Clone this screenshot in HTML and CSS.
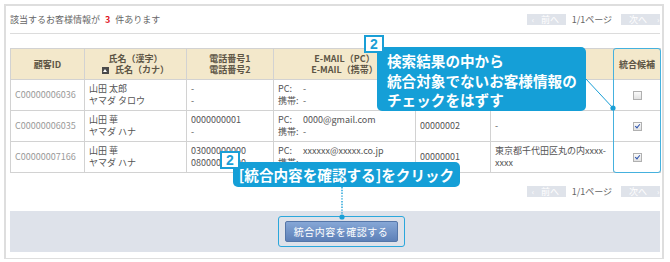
FILE: index.html
```html
<!DOCTYPE html>
<html lang="ja">
<head>
	<meta charset="UTF-8">
	<meta name="viewport" content="width=device-width, initial-scale=1.0">
	<title>お客様情報の統合</title>
	<link rel="stylesheet" href="styles.css">
</head>
<body>
	<div class="frame">
		<div class="summary">
			<p class="count">該当するお客様情報が <em>3</em> 件あります</p>
			<div class="pager">
				<span class="pg-btn prev"><i>‹</i>前へ</span>
				<span class="pg-info">1/1ページ</span>
				<span class="pg-btn next">次へ<i>›</i></span>
			</div>
		</div>

		<table class="results">
			<colgroup>
				<col style="width:74px">
				<col style="width:102px">
				<col style="width:87px">
				<col style="width:142px">
				<col style="width:75px">
				<col style="width:123px">
				<col style="width:47px">
			</colgroup>
			<thead>
				<tr>
					<th>顧客ID</th>
					<th>氏名（漢字）<br><span class="sort"></span> 氏名（カナ）</th>
					<th>電話番号1<br>電話番号2</th>
					<th>E-MAIL（PC）<br>E-MAIL（携帯）</th>
					<th></th>
					<th></th>
					<th>統合候補</th>
				</tr>
			</thead>
			<tbody>
				<tr>
					<td class="cid">C00000006036</td>
					<td>山田 太郎<br>ヤマダ タロウ</td>
					<td>-<br>-</td>
					<td><span class="lbl">PC:</span>-<br><span class="lbl">携帯:</span>-</td>
					<td></td>
					<td></td>
					<td class="pick"><span class="chk"></span></td>
				</tr>
				<tr>
					<td class="cid">C00000006035</td>
					<td>山田 華<br>ヤマダ ハナ</td>
					<td>0000000001<br>-</td>
					<td><span class="lbl">PC:</span>0000@gmail.com<br><span class="lbl">携帯:</span>-</td>
					<td>00000002</td>
					<td>-</td>
					<td class="pick"><span class="chk on"></span></td>
				</tr>
				<tr>
					<td class="cid">C00000007166</td>
					<td>山田 華<br>ヤマダ ハナ</td>
					<td>03000000000<br>08000000000</td>
					<td><span class="lbl">PC:</span>xxxxxx@xxxxx.co.jp<br><span class="lbl">携帯:</span>-</td>
					<td>00000001</td>
					<td>東京都千代田区丸の内xxxx-<br>xxxx</td>
					<td class="pick"><span class="chk on"></span></td>
				</tr>
			</tbody>
		</table>

		<div class="pager pager-bottom">
			<span class="pg-btn prev"><i>‹</i>前へ</span>
			<span class="pg-info">1/1ページ</span>
			<span class="pg-btn next">次へ<i>›</i></span>
		</div>

		<div class="actions">
			<span class="confirm-wrap"><button type="button" class="confirm">統合内容を確認する</button></span>
		</div>
	</div>

	<!-- 注釈 -->
	<div class="col-mark"></div>
	<div class="note note-check">検索結果の中から<br>統合対象でないお客様情報の<br>チェックをはずす</div>
	<span class="step step-check">2</span>
	<div class="note note-confirm">[統合内容を確認する]をクリック</div>
	<span class="step step-confirm">2</span>
	<svg class="leaders" width="670" height="262" viewBox="0 0 670 262">
		<line x1="586" y1="79" x2="613" y2="108" stroke="#1a9fd6" stroke-width="1"/>
		<circle cx="613" cy="108" r="2.6" fill="#1a9fd6"/>
		<line x1="342" y1="187" x2="342" y2="217" stroke="#1a9fd6" stroke-width="1.4" stroke-dasharray="1.4 1.4"/>
		<circle cx="342" cy="217" r="2.6" fill="#1a9fd6"/>
	</svg>
</body>
</html>
```

FILE: styles.css
```css
html, body {
	margin: 0;
	background: #fff;
}
body {
	position: relative;
	width: 670px;
	height: 262px;
	overflow: hidden;
	font-family: "Noto Sans CJK JP", "Noto Sans", sans-serif;
	color: #555;
}

.frame {
	box-sizing: border-box;
	width: 660px;
	height: 255px;
	margin: 4px 0 0 4px;
	padding: 0 2px 0 4px;
	border: 2px solid #dedede;
	border-bottom-width: 1px;
}

/* 件数 + ページ送り */
.summary {
	display: flex;
	align-items: center;
	justify-content: space-between;
	height: 27px;
	border-bottom: 1px solid #dcdcdc;
}
.count {
	margin: 0;
	font-size: 9px;
	color: #666;
}
.count em {
	font-style: normal;
	font-weight: 700;
	color: #e0141e;
	margin: 0 3px;
}
.pager {
	display: flex;
	align-items: center;
	font-size: 9px;
	line-height: 11px;
}
.pg-btn {
	display: flex;
	align-items: center;
	box-sizing: border-box;
	width: 39px;
	height: 11px;
	background: #dfe3ea;
	color: #fff;
}
.pg-btn i {
	font-style: normal;
	font-size: 8px;
}
.prev {
	padding-left: 5px;
	gap: 7px;
}
.next {
	padding-left: 8px;
	gap: 10px;
}
.pg-info {
	margin: 0 9px 0 6px;
	color: #666;
}
.pager-bottom {
	justify-content: flex-end;
	margin-top: 13px;
}

/* 一覧 */
.results {
	width: 650px;
	margin-top: 14px;
	border-collapse: collapse;
	table-layout: fixed;
	font-size: 9px;
	line-height: 12px;
}
.results th,
.results td {
	border: 1px solid #d2d2d2;
	padding: 0 4px;
	vertical-align: middle;
	text-align: left;
	white-space: nowrap;
	overflow: hidden;
}
.results th {
	height: 30px;
	background: #f3e8cb;
	color: #5d5545;
	font-weight: 700;
	text-align: center;
	line-height: 11px;
}
.results td {
	height: 30px;
}
.cid {
	color: #9a9a9a;
}
.lbl {
	display: inline-block;
	width: 25px;
}
.sort {
	display: inline-block;
	width: 7px;
	height: 7px;
	background: #4a4a4a;
	vertical-align: -1px;
	margin-right: 4px;
	position: relative;
}
.sort::after {
	content: '';
	position: absolute;
	left: 1px; top: 2px;
	border-left: 2.5px solid transparent;
	border-right: 2.5px solid transparent;
	border-bottom: 3px solid #fff;
}
.pick {
	text-align: center !important;
}
.chk {
	display: inline-block;
	position: relative;
	box-sizing: border-box;
	width: 9px;
	height: 9px;
	border: 1px solid #b0b0b0;
	background: linear-gradient(#fafafa, #e2e2e2);
	vertical-align: middle;
}
.chk.on::after {
	content: '';
	position: absolute;
	left: 2px; top: 0;
	width: 2px; height: 4px;
	border-right: 1.5px solid #2f56b0;
	border-bottom: 1.5px solid #2f56b0;
	transform: rotate(40deg);
}

/* 下部ボタン */
.actions {
	display: flex;
	align-items: center;
	justify-content: center;
	height: 41px;
	margin-top: 14px;
	padding-left: 12px;
	background: #dee2ea;
}
.confirm-wrap {
	display: block;
	padding: 4px 6px;
	border: 1.5px solid #2aa7dc;
	border-radius: 3px;
}
.confirm {
	display: block;
	width: 113px;
	height: 21px;
	padding: 0;
	border: 1px solid #5576a8;
	border-radius: 2px;
	background: linear-gradient(#86a7d6, #5d80b8);
	color: #fff;
	font-family: inherit;
	font-size: 10px;
	letter-spacing: 0.5px;
}

/* 注釈 */
.col-mark {
	position: absolute;
	left: 613px; top: 48px;
	box-sizing: border-box;
	width: 48px; height: 125px;
	border: 1.5px solid #45b1de;
	border-radius: 3px;
}
.note {
	position: absolute;
	box-sizing: border-box;
	background: #159fd7;
	color: #fff;
	font-weight: 700;
	border-radius: 5px;
	white-space: nowrap;
}
.note-check {
	left: 377px; top: 47px;
	width: 209px; height: 64px;
	padding: 4px 0 0 10px;
	font-size: 14.6px;
	line-height: 19.5px;
}
.note-confirm {
	left: 233px; top: 162px;
	width: 227px; height: 25px;
	text-align: center;
	font-size: 14.6px;
	line-height: 25px;
}
.step {
	position: absolute;
	box-sizing: border-box;
	width: 20px; height: 18px;
	background: #fff;
	border: 2px solid #1a9fd6;
	color: #1a9fd6;
	font-family: "Liberation Sans", sans-serif;
	font-weight: 700;
	font-size: 14px;
	line-height: 14px;
	text-align: center;
}
.step-check {
	left: 364px; top: 35px;
}
.step-confirm {
	left: 220px; top: 151px;
}
.leaders {
	position: absolute;
	left: 0; top: 0;
	pointer-events: none;
}
```
